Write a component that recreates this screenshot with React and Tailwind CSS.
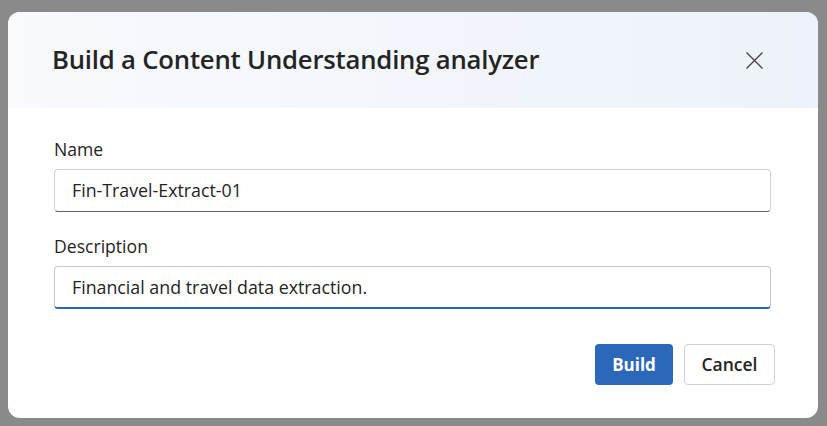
export default function App() {
  const font = { fontFamily: '"Open Sans", "Noto Sans", sans-serif' };
  return (
    <div className="w-[827px] h-[426px] bg-[#8a8a8a] pt-[12px] pl-[8px]" style={font}>
      <div className="w-[810px] h-[406px] bg-white rounded-[12px] overflow-hidden flex flex-col">
        <div className="h-[96px] bg-gradient-to-r from-[#f8fafd] to-[#edf2fa] flex items-center justify-between pl-[44px] pr-[55px]">
          <h1 className="text-[25.7px] font-semibold text-[#242424] tracking-[-0.2px] leading-[32px]">Build a Content Understanding analyzer</h1>
          <svg width="17" height="17" viewBox="0 0 17 17" className="text-[#424242]">
            <path d="M0.5 0.5 L16.5 16.5 M16.5 0.5 L0.5 16.5" stroke="currentColor" strokeWidth="1.3" fill="none" />
          </svg>
        </div>
        <div className="flex flex-col px-[46px] pt-[30px] text-[#242424]">
          <label className="text-[17.6px] leading-[22px] mb-[9px]">Name</label>
          <div className="h-[43px] w-[717px] rounded-[4px] border border-[#d1d1d1] border-b-[#616161] flex items-center px-[17px] text-[17.8px]">
            Fin-Travel-Extract-01
          </div>
          <label className="text-[17.6px] leading-[22px] mt-[23px] mb-[9px]">Description</label>
          <div className="h-[43px] w-[717px] rounded-[4px] border border-[#c7c7c7] border-b-2 border-b-[#2a66b8] flex items-center px-[17px] pt-[1px] text-[17.8px]">
            Financial and travel data extraction.
          </div>
          <div className="flex justify-end gap-[11px] mt-[35px] mr-[-3px]">
            <button className="h-[41px] w-[78px] rounded-[4px] bg-[#2b68b9] text-white text-[17px] font-bold">Build</button>
            <button className="h-[41px] w-[91px] rounded-[4px] border border-[#d1d1d1] bg-white text-[#242424] text-[17.5px] font-semibold">Cancel</button>
          </div>
        </div>
      </div>
    </div>
  );
}
